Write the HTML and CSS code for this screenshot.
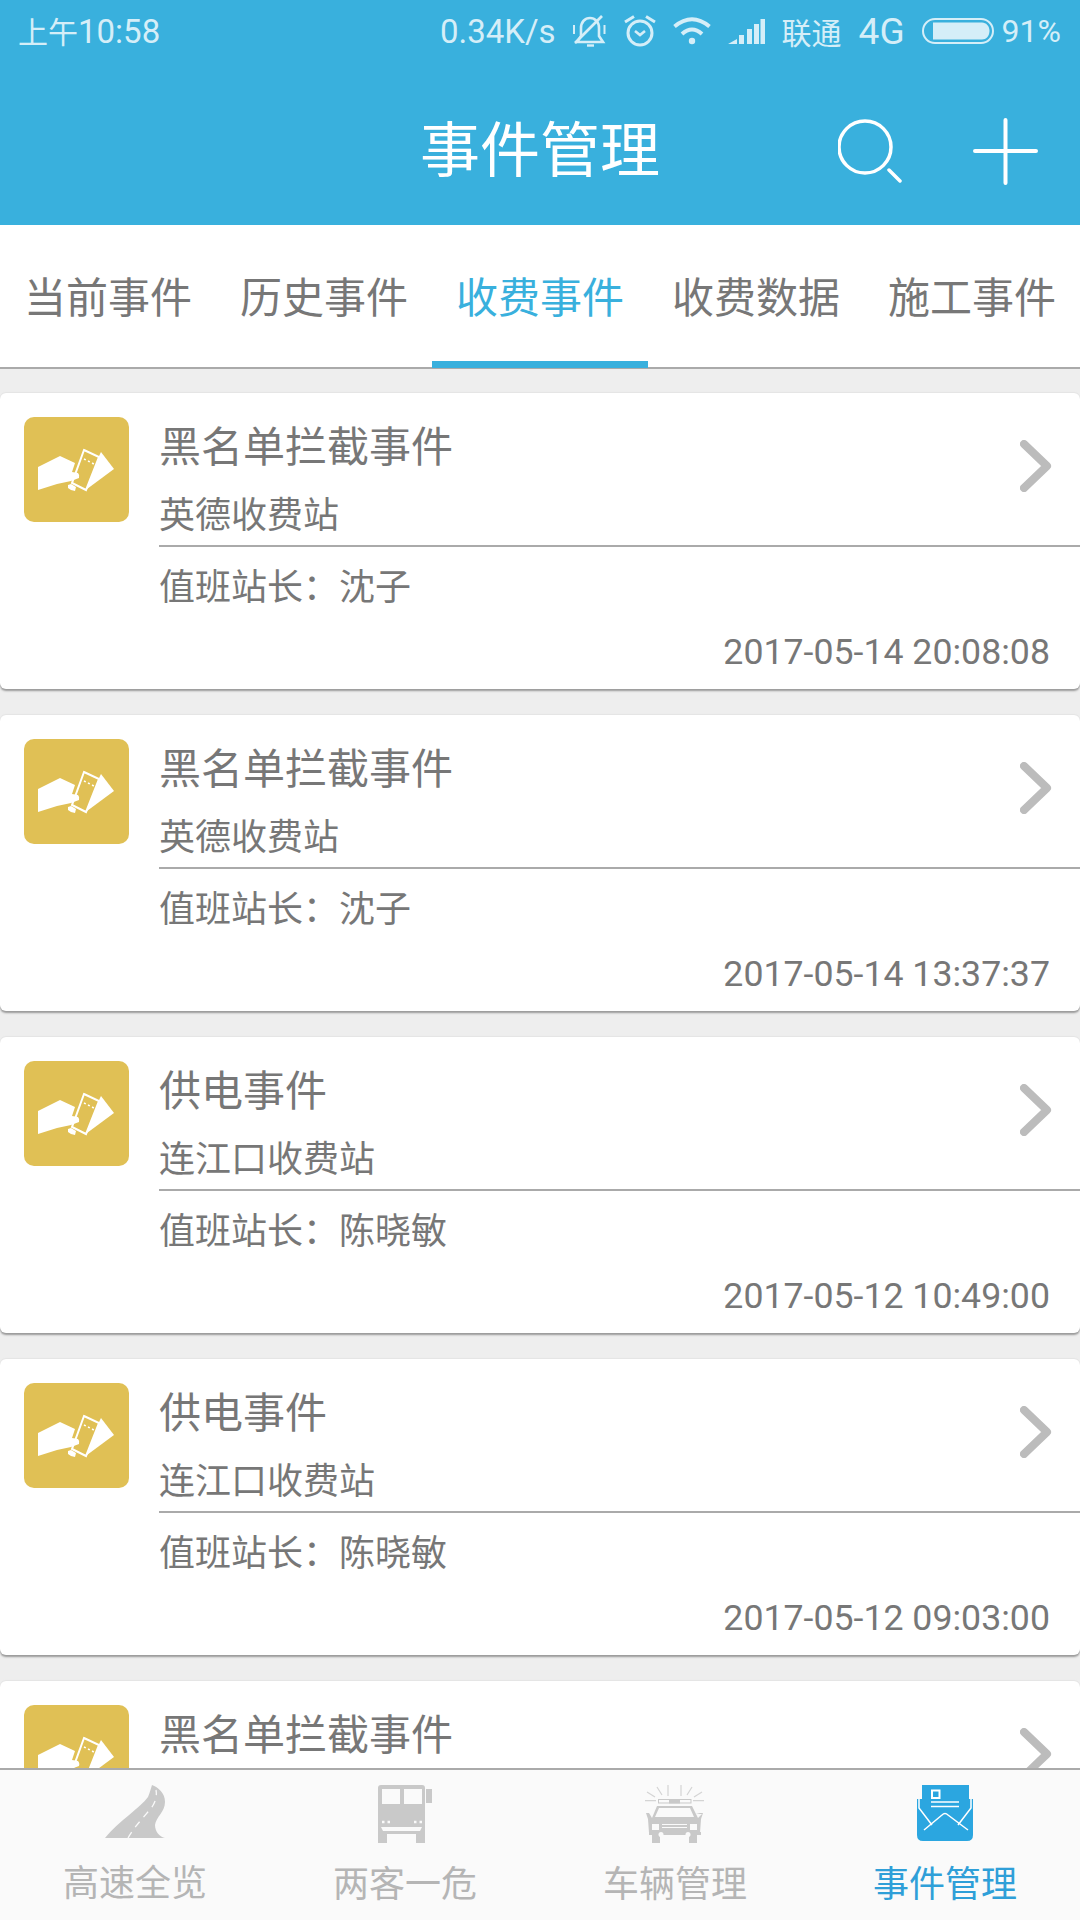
FILE: index.html

```html
<!DOCTYPE html>
<html lang="zh-CN">
<head>
  <meta charset="UTF-8">
  <title>事件管理</title>
  <link rel="stylesheet" href="styles.css">
</head>
<body>
  <svg class="defs" width="0" height="0">
    <symbol id="ico-ticket" viewBox="0 0 105 105">
      <path fill="#fff" d="M77 35L90 52L63 72L60 70Z"/>
      <path fill="#e0c055" stroke="#fff" stroke-width="2" d="M60 33L75 40L62 73L48 66Z"/>
      <path fill="#fff" d="M14 50L36 39L51 46L48 55L54 56Q56 58 55 61L47 64L33 67L14 73Z"/>
      <path fill="#fff" d="M44 68L47 67L52 70L51 74L47 73L44 71Z"/>
      <path stroke="#fff" stroke-width="1.600" stroke-dasharray="2 2.500" d="M60 42L72 48"/>
    </symbol>
    <symbol id="ico-chevron" viewBox="0 0 32 52">
      <path fill="none" stroke="#bcbcbc" stroke-width="8" stroke-linecap="round" stroke-linejoin="round" d="M4 4L27 26L4 48"/>
    </symbol>
  </svg>

  <div class="app">
    <header class="top">
      <div class="status">
        <span class="status-time"><span class="status-cjk">上午</span>10:58</span>
        <div class="status-right">
          <span>0.34K/s</span>
          <svg width="34" height="32" viewBox="0 0 34 32" fill="none" stroke="#d5eef8" stroke-width="2.600">
            <path d="M4 27H30L26 21V13C26 7 22 3 17 3C12 3 8 7 8 13V21Z"/>
            <path d="M2 28L29 1"/>
            <path d="M14 30.500H21" stroke-width="2.400"/>
            <path d="M1 10V19M31.500 10V19" stroke-width="2"/>
          </svg>
          <svg width="32" height="32" viewBox="0 0 32 32" fill="none" stroke="#d5eef8" stroke-width="3">
            <circle cx="16" cy="18" r="12"/>
            <path d="M11 16L16 20L21 16" stroke-width="2.600"/>
            <path d="M1 7L10 1.500M31 7L22 1.500"/>
          </svg>
          <svg width="38" height="28" viewBox="0 0 38 28" fill="none" stroke="#d5eef8" stroke-width="4">
            <path d="M1.500 9.500Q19 -5 36.500 9.500"/>
            <path d="M9 17Q19 8 29 17"/>
            <circle cx="19" cy="24" r="3.200" fill="#d5eef8" stroke="none"/>
          </svg>
          <svg width="37" height="25" viewBox="0 0 37 25" fill="#d5eef8">
            <path d="M0 25L9 20V25ZM11 16H16V25H11ZM19 10H24V25H19ZM26 5H31V25H26ZM32.500 0H37V25H32.500Z"/>
          </svg>
          <span class="status-cjk">联通</span>
          <span class="status-net">4G</span>
          <svg width="72" height="26" viewBox="0 0 72 26">
            <rect x="1" y="1" width="70" height="24" rx="12" fill="none" stroke="#d5eef8" stroke-width="2"/>
            <path fill="#d5eef8" d="M11 4.500H60C64 4.500 67.500 8 67.500 13C67.500 18 64 21.500 60 21.500H11Z"/>
          </svg>
          <span class="status-pct">91%</span>
        </div>
      </div>
      <div class="appbar">
        <div></div>
        <h1 class="appbar-title">事件管理</h1>
        <div class="appbar-actions">
          <svg width="64" height="70" viewBox="0 0 64 70" fill="none" stroke="#fff" stroke-width="3.500" stroke-linecap="round">
            <circle cx="27" cy="30" r="26"/>
            <path d="M51 53L62 64"/>
          </svg>
          <svg width="65" height="70" viewBox="0 0 65 70" fill="none" stroke="#fff" stroke-width="4" stroke-linecap="round">
            <path d="M2 34H63M32.500 3V66"/>
          </svg>
        </div>
      </div>
    </header>

    <nav class="tabs">
      <a class="tab">当前事件</a>
      <a class="tab">历史事件</a>
      <a class="tab active">收费事件</a>
      <a class="tab">收费数据</a>
      <a class="tab">施工事件</a>
    </nav>

    <main class="list">
      <article class="card">
        <div class="card-icon"><svg width="105" height="105"><use href="#ico-ticket"/></svg></div>
        <div class="card-body">
          <div class="card-head">
            <div class="card-text">
              <div class="card-title">黑名单拦截事件</div>
              <div class="card-sub">英德收费站</div>
            </div>
            <svg class="chevron" width="32" height="52"><use href="#ico-chevron"/></svg>
          </div>
          <div class="card-person">值班站长：沈子</div>
          <div class="card-date">2017-05-14 20:08:08</div>
        </div>
      </article>
      <article class="card">
        <div class="card-icon"><svg width="105" height="105"><use href="#ico-ticket"/></svg></div>
        <div class="card-body">
          <div class="card-head">
            <div class="card-text">
              <div class="card-title">黑名单拦截事件</div>
              <div class="card-sub">英德收费站</div>
            </div>
            <svg class="chevron" width="32" height="52"><use href="#ico-chevron"/></svg>
          </div>
          <div class="card-person">值班站长：沈子</div>
          <div class="card-date">2017-05-14 13:37:37</div>
        </div>
      </article>
      <article class="card">
        <div class="card-icon"><svg width="105" height="105"><use href="#ico-ticket"/></svg></div>
        <div class="card-body">
          <div class="card-head">
            <div class="card-text">
              <div class="card-title">供电事件</div>
              <div class="card-sub">连江口收费站</div>
            </div>
            <svg class="chevron" width="32" height="52"><use href="#ico-chevron"/></svg>
          </div>
          <div class="card-person">值班站长：陈晓敏</div>
          <div class="card-date">2017-05-12 10:49:00</div>
        </div>
      </article>
      <article class="card">
        <div class="card-icon"><svg width="105" height="105"><use href="#ico-ticket"/></svg></div>
        <div class="card-body">
          <div class="card-head">
            <div class="card-text">
              <div class="card-title">供电事件</div>
              <div class="card-sub">连江口收费站</div>
            </div>
            <svg class="chevron" width="32" height="52"><use href="#ico-chevron"/></svg>
          </div>
          <div class="card-person">值班站长：陈晓敏</div>
          <div class="card-date">2017-05-12 09:03:00</div>
        </div>
      </article>
      <article class="card">
        <div class="card-icon"><svg width="105" height="105"><use href="#ico-ticket"/></svg></div>
        <div class="card-body">
          <div class="card-head">
            <div class="card-text">
              <div class="card-title">黑名单拦截事件</div>
              <div class="card-sub">英德收费站</div>
            </div>
            <svg class="chevron" width="32" height="52"><use href="#ico-chevron"/></svg>
          </div>
        </div>
      </article>
    </main>

    <footer class="bottom">
      <a class="bottom-item">
        <svg width="100" height="70" viewBox="-5 0 100 70">
          <path fill="#c9c9c9" d="M15 63C30 45 50 33 58 22C60 17 61 13 62 10C68 12 75 18 75 27C75 37 66 42 65 50C65 57 70 62 75 63Z"/>
          <path fill="none" stroke="#fafafa" stroke-width="1.300" stroke-dasharray="7 6" d="M38 63C44 52 54 42 62 32C66 26 67 20 66 15"/>
        </svg>
        <span class="bottom-label">高速全览</span>
      </a>
      <a class="bottom-item">
        <svg width="100" height="70" viewBox="-5 0 100 70">
          <path fill="#c9c9c9" d="M18 13Q18 10 21 10H62Q65 10 65 13V68H56V59H27V68H18ZM66 14H72V28H66Z"/>
          <path fill="#fafafa" d="M22 14H40V29H22ZM44 14H62V29H44ZM21 52H62L60 56H23Z"/>
          <path stroke="#fafafa" stroke-width="2.500" stroke-dasharray="2.500 3" d="M22 47H31M54 47H63"/>
        </svg>
        <span class="bottom-label">两客一危</span>
      </a>
      <a class="bottom-item">
        <svg width="100" height="70" viewBox="-5 0 100 70">
          <path fill="none" stroke="#d4d4d4" stroke-width="1.200" d="M15 25.700H26M17 17L25 22M27 12L32 20M38 10V21M51 10V21M62 12L57 20M72 17L64 22M74 25.700H63"/>
          <rect x="28.500" y="24.500" width="32.500" height="3.500" fill="#fafafa" stroke="#c9c9c9"/>
          <rect x="39" y="24" width="11" height="4.500" fill="#c9c9c9"/>
          <path fill="#c9c9c9" d="M27 31H62L68 43L72 39H66L70 38L73 38L71 44L70 58H19L18 44L16 38L19 38L22 43ZM19 57H71V60H19ZM22 60H30V68H22ZM59 60H67V68H59Z"/>
          <path fill="#fafafa" d="M29 33H60L64 42H25ZM22 49H29V55H22ZM60 49H67V55H60ZM32 49H57V50H32ZM32 52H57V53H32Z"/>
          <circle cx="31" cy="59.500" r="2.500" fill="#fafafa"/>
          <circle cx="58" cy="59.500" r="2.500" fill="#fafafa"/>
        </svg>
        <span class="bottom-label">车辆管理</span>
      </a>
      <a class="bottom-item active">
        <svg width="100" height="70" viewBox="-5 0 100 70">
          <path fill="#2ba6e0" d="M22 10H69V24H73V60Q73 66 67 66H23Q17 66 17 60V24H22Z"/>
          <path fill="none" stroke="#fff" stroke-width="1.500" d="M19 24V33L32 50M71 24V33L58 50M24 55L42 40Q45 37 48 40L68 55"/>
          <rect x="32" y="15.500" width="7.500" height="7.500" fill="none" stroke="#fff" stroke-width="2"/>
          <path stroke="#fff" stroke-width="1.500" d="M31 27H59M31 31.500H59"/>
        </svg>
        <span class="bottom-label">事件管理</span>
      </a>
    </footer>
  </div>
</body>
</html>
```

FILE: styles.css

```css
* { box-sizing: border-box; }
html, body { margin: 0; padding: 0; }
body { font-family: Roboto, "Noto Sans CJK SC", sans-serif; background: #eee; color: #777; }
.defs { display: block; height: 0; }
.app { width: 1080px; height: 1920px; display: flex; flex-direction: column; overflow: hidden; }

/* header */
.top { height: 225px; background: #39b0dd; color: #fff; flex: none; }
.status { height: 62px; padding: 0 19px 0 18px; display: flex; justify-content: space-between; align-items: center; color: #d5eef8; font-size: 33px; }
.status-time { margin-top: -2px; }
.status-right { display: flex; align-items: center; gap: 17px; }
.status-cjk { font-size: 30px; }
.status-net { font-size: 37px; margin-top: 1px; }
.status-pct { margin-left: -9px; font-size: 32px; }
.appbar { height: 163px; padding: 17px 42px 0 0; display: grid; grid-template-columns: 1fr auto 1fr; align-items: center; }
.appbar-title { margin: 0 0 0 42px; font-size: 60px; font-weight: 400; line-height: 1; }
.appbar-actions { display: flex; justify-content: flex-end; gap: 71px; }

/* tabs */
.tabs { height: 144px; flex: none; display: grid; grid-template-columns: repeat(5, 1fr); background: #fff; border-bottom: 2px solid #aaa; }
.tab { display: flex; align-items: center; justify-content: center; padding-top: 2px; font-size: 42px; color: #777; border-bottom: 7px solid transparent; margin-bottom: -1px; }
.tab.active { color: #39b0dd; border-bottom-color: #39b0dd; }

/* list */
.list { flex: 1; overflow: hidden; padding-top: 24px; display: flex; flex-direction: column; gap: 26px; min-height: 0; }
.card { flex: none; height: 296px; padding: 24px 0 0 24px; display: flex; gap: 30px; background: #fff; border-radius: 6px; box-shadow: 0 2px 2px #999, 0 -1px 1px #e4e4e4; }
.card-icon { width: 105px; height: 105px; flex: none; background: #e0c055; border-radius: 10px; }
.card-icon svg { display: block; }
.card-body { flex: 1; min-width: 0; }
.card-head { display: flex; justify-content: space-between; align-items: flex-start; height: 130px; padding: 1px 28px 0 0; border-bottom: 2px solid #aaa; }
.card-title { font-size: 42px; line-height: 60px; }
.card-sub { margin-top: 13px; font-size: 36px; line-height: 50px; }
.chevron { margin-top: 22px; }
.card-person { margin-top: 16px; font-size: 36px; line-height: 50px; }
.card-date { margin-top: 14px; padding-right: 30px; font-size: 35.7px; line-height: 50px; text-align: right; }

/* bottom bar */
.bottom { height: 152px; flex: none; display: grid; grid-template-columns: repeat(4, 1fr); background: #fafafa; border-top: 2px solid #aaa; }
.bottom-item { display: flex; flex-direction: column; align-items: center; padding-top: 5px; }
.bottom-label { margin-top: 15px; font-size: 36px; line-height: 50px; color: #b5b5b5; }
.bottom-item:first-child .bottom-label { margin-top: 14px; }
.bottom-item.active .bottom-label { color: #2f9fd8; }
```
